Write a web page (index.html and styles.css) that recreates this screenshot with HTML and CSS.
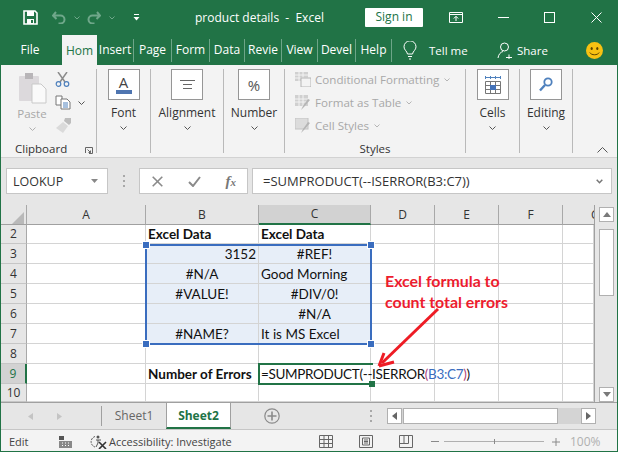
FILE: index.html
```html
<!DOCTYPE html>
<html lang="en">
<head>
  <meta charset="UTF-8">
  <title>product details - Excel</title>
  <link rel="stylesheet" href="styles.css">
</head>
<body>
  <div class="window">
    <div class="titlebar">
      <svg class="qat-save" width="15" height="15" viewBox="0 0 15 15"><path d="M1 1h11l2 2v11H1z" fill="none" stroke="#fff" stroke-width="1.6"/><rect x="4" y="1" width="7" height="5" fill="#fff"/><rect x="4" y="9" width="7" height="5" fill="#fff"/><rect x="8" y="10" width="2" height="3" fill="#217346"/></svg>
      <svg class="qat-undo" width="14" height="13" viewBox="0 0 14 13"><path d="M4 1 1 4.500 4.500 8M1.500 4.500h7a4 4 0 0 1 0 8h-2" fill="none" stroke="#6fa78a" stroke-width="2"/></svg>
      <svg class="qat-chev" width="6" height="4" viewBox="0 0 6 4"><path d="M.5.500 3 3 5.500.5" fill="none" stroke="#6fa78a"/></svg>
      <svg class="qat-redo" width="14" height="13" viewBox="0 0 14 13"><path d="M10 1l3 3.500L9.500 8M12.500 4.500h-7a4 4 0 0 0 0 8h2" fill="none" stroke="#6fa78a" stroke-width="2"/></svg>
      <svg class="qat-chev" width="6" height="4" viewBox="0 0 6 4"><path d="M.5.500 3 3 5.500.5" fill="none" stroke="#6fa78a"/></svg>
      <svg class="qat-more" width="7" height="7" viewBox="0 0 7 7"><path d="M1 .5h5" stroke="#fff"/><path d="M.5 3h6L3.500 6.500z" fill="#fff"/></svg>
      <span class="doc-title">product details&nbsp; - &nbsp;Excel</span>
      <span class="signin">Sign in</span>
      <svg class="win-display" width="14" height="11" viewBox="0 0 14 11"><path d="M.5.500h13v10H.5zM.5 2.500h13M7 9V4.500M4.800 6.500 7 4.300l2.200 2.200" fill="none" stroke="#fff"/></svg>
      <svg class="win-min" width="11" height="1" viewBox="0 0 11 1"><path d="M0 .5h11" stroke="#fff"/></svg>
      <svg class="win-max" width="11" height="11" viewBox="0 0 11 11"><rect x=".5" y=".5" width="10" height="10" fill="none" stroke="#fff"/></svg>
      <svg class="win-close" width="11" height="11" viewBox="0 0 11 11"><path d="M.5.500l10 10M10.500.5l-10 10" stroke="#fff"/></svg>
    </div>

    <div class="tabs">
      <span class="tab tab-file">File</span>
      <span class="tab tab-active">Hom</span>
      <span class="tab w37">Insert</span>
      <span class="tab w38">Page</span>
      <span class="tab w38">Form</span>
      <span class="tab w35">Data</span>
      <span class="tab w37">Revie</span>
      <span class="tab w36">View</span>
      <span class="tab w38">Devel</span>
      <span class="tab w36">Help</span>
      <svg class="bulb" width="14" height="19" viewBox="0 0 14 19"><path d="M4.500 13C4 10 1 9 1 5.800a6 6 0 0 1 12 0C13 9 10 10 9.500 13zM5 15.500h4M6 18h2" fill="none" stroke="#fff"/></svg>
      <span class="tellme">Tell me</span>
      <svg class="share-icon" width="16" height="17" viewBox="0 0 16 17"><circle cx="7.500" cy="5" r="4" fill="none" stroke="#fff"/><path d="M1 16c.5-3.500 2.500-6 5-6.500M9 15.500h6M12 12.500v6" fill="none" stroke="#fff"/></svg>
      <span class="share">Share</span>
      <svg class="smiley" width="17" height="17" viewBox="0 0 17 17"><circle cx="8.500" cy="8.500" r="8.500" fill="#f7c112"/><ellipse cx="5.700" cy="6.500" rx="1.100" ry="1.600" fill="#5a4300"/><ellipse cx="11.300" cy="6.500" rx="1.100" ry="1.600" fill="#5a4300"/><path d="M3.800 10.500c1.500 3 7.900 3 9.400 0" fill="none" stroke="#5a4300"/></svg>
    </div>

    <div class="ribbon">
      <div class="group g-clip">
        <div class="clip-body">
          <div class="paste">
            <svg width="29" height="31" viewBox="0 0 29 31"><rect x="1" y="3" width="20" height="25" rx="1" fill="#dcd9dc"/><rect x="7" y="0" width="8" height="6" fill="#b8b5b8"/><path d="M14 11h9l5 5v14H14z" fill="#fafafa" stroke="#c9c9c9"/></svg>
            <span class="muted">Paste</span>
            <svg class="chev" width="7" height="4" viewBox="0 0 7 4"><path d="M.5.500 3.500 3.500 6.500.5" fill="none" stroke="#b0b0b0"/></svg>
          </div>
          <div class="clip-tools">
            <svg width="15" height="15" viewBox="0 0 15 15"><path d="M3 0l7 10M12 0 5 10" stroke="#8c8c8c" stroke-width="1.500"/><circle cx="3.500" cy="12" r="2.300" fill="none" stroke="#4f81bd" stroke-width="1.200"/><circle cx="11.500" cy="12" r="2.300" fill="none" stroke="#4f81bd" stroke-width="1.200"/></svg>
            <div class="copy-row">
              <svg width="16" height="15" viewBox="0 0 16 15"><path d="M1 1h6v9H1z" fill="#fff" stroke="#777"/><path d="M6 4h6l3 3v7H6z" fill="#fff" stroke="#777"/><path d="M8 8h5M8 10h5M8 12h5" stroke="#4f81bd"/></svg>
              <svg width="7" height="4" viewBox="0 0 7 4"><path d="M.5.500 3.500 3.500 6.500.5" fill="none" stroke="#555"/></svg>
            </div>
            <svg width="17" height="16" viewBox="0 0 17 16"><path d="M10 0h6v5l-2 2-5-4z" fill="#bdbdbd"/><path d="M8 4l5 4-5 7-7-5z" fill="#dadada"/></svg>
          </div>
        </div>
        <div class="group-label clip-label">Clipboard
          <svg class="launcher" width="8" height="7" viewBox="0 0 8 7"><path d="M.5 6V.5H7.500V6.500H4M2.500 2.500l3 3M5.500 3.500v2H3.500" fill="none" stroke="#666"/></svg>
        </div>
      </div>

      <div class="group g-font">
        <div class="box box-font">
          <span class="box-letter">A</span>
          <i class="font-bar"></i>
        </div>
        <span class="label">Font</span>
        <svg class="chev" width="7" height="4" viewBox="0 0 7 4"><path d="M.5.500 3.500 3.500 6.500.5" fill="none" stroke="#555"/></svg>
      </div>

      <div class="group g-align">
        <div class="box">
          <svg width="15" height="9" viewBox="0 0 15 9"><path d="M0 .5h15M3 4.500h9M3 8.500h9" stroke="#666"/></svg>
        </div>
        <span class="label">Alignment</span>
        <svg class="chev" width="7" height="4" viewBox="0 0 7 4"><path d="M.5.500 3.500 3.500 6.500.5" fill="none" stroke="#555"/></svg>
      </div>

      <div class="group g-number">
        <div class="box"><span class="percent">%</span></div>
        <span class="label">Number</span>
        <svg class="chev" width="7" height="4" viewBox="0 0 7 4"><path d="M.5.500 3.500 3.500 6.500.5" fill="none" stroke="#555"/></svg>
      </div>

      <div class="group g-styles">
        <div class="style-rows">
          <div class="style-row">
            <svg width="16" height="15" viewBox="0 0 16 15"><path d="M0 0h13v9H0z" fill="#d0d0d0"/><path d="M4 0v9M8 0v9M0 3h13M0 6h13" stroke="#f3f3f3"/><rect x="6" y="6" width="10" height="9" fill="#f3f3f3" stroke="#b5b5b5"/></svg>
            <span>Conditional Formatting</span>
            <svg width="6" height="4" viewBox="0 0 6 4"><path d="M.5.500 3 3 5.500.5" fill="none" stroke="#b5b5b5"/></svg>
          </div>
          <div class="style-row">
            <svg width="16" height="16" viewBox="0 0 16 16"><path d="M0 0h13v11H0z" fill="#d0d0d0"/><path d="M4 0v11M8 0v11M0 4h13M0 7h13" stroke="#f3f3f3"/><path d="M15 5 9 12l-3 3 2-4 5-7z" fill="#b5b5b5"/></svg>
            <span>Format as Table</span>
            <svg width="6" height="4" viewBox="0 0 6 4"><path d="M.5.500 3 3 5.500.5" fill="none" stroke="#b5b5b5"/></svg>
          </div>
          <div class="style-row">
            <svg width="16" height="16" viewBox="0 0 16 16"><rect width="13" height="11" fill="#dcdcdc" stroke="#c4c4c4"/><path d="M15 5 9 12l-3 3 2-4 5-7z" fill="#b5b5b5"/></svg>
            <span>Cell Styles</span>
            <svg width="6" height="4" viewBox="0 0 6 4"><path d="M.5.500 3 3 5.500.5" fill="none" stroke="#b5b5b5"/></svg>
          </div>
        </div>
        <div class="group-label">Styles</div>
      </div>

      <div class="group g-cells">
        <div class="box">
          <svg width="16" height="18" viewBox="0 0 16 18"><path d="M.5 1.500h15M.5 0v3M5.500 0v3M10.500 0v3M15.500 0v3" stroke="#4f81bd" fill="none"/><path d="M.5 5.500h15v12H.5zM5.500 5.500v12M10.500 5.500v12M.5 9.500h15M.5 13.500h15" stroke="#777" fill="none"/><rect x="5" y="9" width="6" height="5" fill="#4472b8"/></svg>
        </div>
        <span class="label">Cells</span>
        <svg class="chev" width="7" height="4" viewBox="0 0 7 4"><path d="M.5.500 3.500 3.500 6.500.5" fill="none" stroke="#555"/></svg>
      </div>

      <div class="group g-editing">
        <div class="box">
          <svg width="14" height="15" viewBox="0 0 14 15"><circle cx="9" cy="5" r="3.700" fill="none" stroke="#4f81bd" stroke-width="1.800"/><path d="M6 8l-5 5.500" stroke="#4f81bd" stroke-width="2.400"/></svg>
        </div>
        <span class="label">Editing</span>
        <svg class="chev" width="7" height="4" viewBox="0 0 7 4"><path d="M.5.500 3.500 3.500 6.500.5" fill="none" stroke="#555"/></svg>
      </div>

      <div class="ribbon-end">
        <svg width="11" height="6" viewBox="0 0 11 6"><path d="M.5 5.500 5.500.5l5 5" fill="none" stroke="#555"/></svg>
      </div>
    </div>

    <div class="formula-bar">
      <div class="name-box">LOOKUP
        <svg width="7" height="4" viewBox="0 0 7 4"><path d="M0 0h7L3.500 4z" fill="#888"/></svg>
      </div>
      <div class="grip"><i></i><i></i><i></i></div>
      <div class="fx-box">
        <svg width="11" height="11" viewBox="0 0 11 11"><path d="M.7.700l9.600 9.600M10.300.7.700 10.300" stroke="#8a8a8a" stroke-width="1.600"/></svg>
        <svg width="13" height="11" viewBox="0 0 13 11"><path d="M1 6l4 4 7-9" fill="none" stroke="#8a8a8a" stroke-width="2"/></svg>
        <span class="fx">f<small>x</small></span>
      </div>
      <div class="formula-input">=SUMPRODUCT(--ISERROR(B3:C7))
        <svg width="7" height="5" viewBox="0 0 7 5"><path d="M.7.700 3.500 3.700 6.300.7" fill="none" stroke="#777" stroke-width="1.500"/></svg>
      </div>
    </div>

    <div class="sheet-area">
      <div class="grid-wrap">
        <table class="grid">
          <colgroup>
            <col class="c-head"><col class="c-a"><col class="c-b"><col class="c-c"><col class="c-n"><col class="c-n"><col class="c-n"><col class="c-g">
          </colgroup>
          <tr class="col-heads">
            <th class="corner"><svg width="12" height="12" viewBox="0 0 12 12"><path d="M12 0v12H0z" fill="#b9b9b9"/></svg></th>
            <th>A</th><th>B</th><th class="head-on">C</th><th>D</th><th>E</th><th>F</th><th class="head-g">G</th>
          </tr>
          <tr class="r19"><th>2</th><td></td><td class="bold">Excel Data</td><td class="bold">Excel Data</td><td></td><td></td><td></td><td></td></tr>
          <tr><th>3</th><td></td><td class="sel right">3152</td><td class="sel center">#REF!</td><td></td><td></td><td></td><td></td></tr>
          <tr><th>4</th><td></td><td class="sel center">#N/A</td><td class="sel">Good Morning</td><td></td><td></td><td></td><td></td></tr>
          <tr><th>5</th><td></td><td class="sel center">#VALUE!</td><td class="sel center">#DIV/0!</td><td></td><td></td><td></td><td></td></tr>
          <tr><th>6</th><td></td><td class="sel"></td><td class="sel center">#N/A</td><td></td><td></td><td></td><td></td></tr>
          <tr><th>7</th><td></td><td class="sel center">#NAME?</td><td class="sel">It is MS Excel</td><td></td><td></td><td></td><td></td></tr>
          <tr><th>8</th><td></td><td></td><td></td><td></td><td></td><td></td><td></td></tr>
          <tr><th class="head-row-on">9</th><td></td><td class="bold nowrap">Number of Errors</td><td class="nowrap spill">=SUMPRODUCT(--ISERROR<span class="paren">(</span><span class="ref">B3:C7</span><span class="paren">)</span>)</td><td></td><td></td><td></td><td></td></tr>
          <tr class="r18"><th>10</th><td></td><td></td><td></td><td></td><td></td><td></td><td></td></tr>
        </table>

        <div class="range-sel">
          <i class="handle h-tl"></i><i class="handle h-tr"></i><i class="handle h-bl"></i><i class="handle h-br"></i>
        </div>
        <div class="active-cell"><i class="active-handle"></i></div>
        <div class="note">Excel formula to<br>count total errors</div>
        <svg class="arrow" width="66" height="62" viewBox="0 0 66 62"><path d="M62 2 6 56" stroke="#ee1c25" stroke-width="3"/><path d="M3 59 8 46M3 59l15-4" stroke="#ee1c25" stroke-width="3" fill="none"/></svg>
      </div>
      <div class="vscroll">
        <span class="vbtn"><svg width="8" height="5" viewBox="0 0 8 5"><path d="M4 0l4 5H0z" fill="#7a7a7a"/></svg></span>
        <span class="vthumb"></span>
        <span class="vbtn vbtn-down"><svg width="8" height="5" viewBox="0 0 8 5"><path d="M4 5 8 0H0z" fill="#7a7a7a"/></svg></span>
      </div>
    </div>

    <div class="sheet-tabs">
      <svg class="nav-l" width="5" height="7" viewBox="0 0 5 7"><path d="M5 0v7L0 3.500z" fill="#c4c4c4"/></svg>
      <svg class="nav-r" width="5" height="7" viewBox="0 0 5 7"><path d="M0 0v7l5-3.500z" fill="#c4c4c4"/></svg>
      <span class="tab-sep"></span>
      <span class="sheet">Sheet1</span>
      <span class="sheet sheet-active">Sheet2</span>
      <svg class="add-sheet" width="16" height="16" viewBox="0 0 16 16"><circle cx="8" cy="8" r="7.200" fill="none" stroke="#8a8a8a" stroke-width="1.200"/><path d="M8 3.500v9M3.500 8h9" stroke="#8a8a8a" stroke-width="1.600"/></svg>
      <div class="tab-grip"><i></i><i></i><i></i></div>
      <div class="hscroll">
        <span class="hbtn"><svg width="5" height="8" viewBox="0 0 5 8"><path d="M5 0v8L0 4z" fill="#666"/></svg></span>
        <span class="hthumb"></span>
        <span class="hbtn hbtn-right"><svg width="5" height="8" viewBox="0 0 5 8"><path d="M0 0v8l5-4z" fill="#666"/></svg></span>
      </div>
    </div>

    <div class="statusbar">
      <span class="st-edit">Edit</span>
      <svg class="st-macro" width="13" height="12" viewBox="0 0 13 12"><rect x="0" y="0" width="5" height="4" fill="#555"/><path d="M0 5h13v7H0z" fill="#888"/><path d="M3 7h1M6 7h1M9 7h1M3 9.500h1M6 9.500h1M9 9.500h1" stroke="#fff"/></svg>
      <svg class="st-acc" width="17" height="14" viewBox="0 0 17 14"><path d="M5 1.500a5.500 5.500 0 0 0 0 10.500" fill="none" stroke="#555" stroke-dasharray="2 1"/><circle cx="8" cy="2" r="1.500" fill="#555"/><path d="M6 5h5M8 5v3M8 8l-2 4" stroke="#555" fill="none"/><path d="M9 7l7 7M16 7l-7 7" stroke="#333" stroke-width="1.600"/></svg>
      <span class="st-acc-text">Accessibility: Investigate</span>
      <svg class="st-view1" width="14" height="13" viewBox="0 0 14 13"><path d="M.5.500h13v12H.5zM.5 4.500h13M.5 8.500h13M5 .5v12M9.500.5v12" fill="none" stroke="#666"/></svg>
      <svg class="st-view2" width="14" height="13" viewBox="0 0 14 13"><path d="M.5.500h13v12H.5z" fill="none" stroke="#666"/><path d="M3.500 3h7v7h-7zM5 5h4M5 6.500h4M5 8h4" fill="none" stroke="#666"/></svg>
      <svg class="st-view3" width="14" height="13" viewBox="0 0 14 13"><path d="M.5.500h13v12H.5zM.5 8.500h9V.5M5 .5v8" fill="none" stroke="#666"/></svg>
      <svg class="st-minus" width="8" height="1" viewBox="0 0 8 1"><path d="M0 .5h8" stroke="#8a8a8a"/></svg>
      <div class="st-slider"><i></i></div>
      <svg class="st-plus" width="8" height="8" viewBox="0 0 8 8"><path d="M0 4h8M4 0v8" stroke="#8a8a8a"/></svg>
      <span class="st-zoom">100%</span>
    </div>
  </div>
</body>
</html>
```

FILE: styles.css
```css
* {
  box-sizing: border-box;
}
body {
  margin: 0;
  font-family: "Open Sans", Arial, sans-serif;
  color: #333;
}
.window {
  width: 618px;
  height: 452px;
  border: 1px solid #217346;
  border-top: 0;
  background: #e6e6e6;
  overflow: hidden;
}
svg {
  display: block;
  flex: none;
}

/* title bar */
.titlebar {
  height: 35px;
  margin-left: -1px;
  margin-right: -1px;
  background: #217346;
  display: flex;
  align-items: center;
  color: #fff;
}
.qat-save { margin-left: 23px; }
.qat-undo { margin-left: 14px; }
.qat-chev { margin-left: 8px; }
.qat-redo { margin-left: 7px; }
.qat-more { margin-left: 18px; }
.doc-title {
  margin-left: 55px;
  width: 123px;
  font-size: 12px;
  white-space: nowrap;
}
.signin {
  margin-left: 47px;
  width: 58px;
  height: 19px;
  background: #fff;
  color: #217346;
  font-size: 12px;
  line-height: 18px;
  text-align: center;
  border-radius: 1px;
}
.win-display { margin-left: 26px; }
.win-min { margin-left: 35px; }
.win-max { margin-left: 35px; }
.win-close { margin-left: 36px; }

/* ribbon tabs */
.tabs {
  height: 30px;
  margin-left: -1px;
  margin-right: -1px;
  background: #217346;
  display: flex;
  align-items: center;
  color: #fff;
  font-size: 12px;
}
.tab {
  height: 23px;
  line-height: 22px;
  text-align: center;
  border-right: 1px solid #6da588;
  white-space: nowrap;
  overflow: hidden;
}
.tab-file {
  width: 62px;
  border-right: 0;
  padding-right: 2px;
}
.tab-active {
  width: 35px;
  height: 30px;
  line-height: 32px;
  background: #f3f3f3;
  color: #217346;
  border-right: 0;
}
.w35 { width: 35px; }
.w36 { width: 36px; }
.w37 { width: 37px; }
.w38 { width: 38px; }
.bulb { margin-left: 11px; }
.tellme {
  margin-left: 12px;
  width: 40px;
  white-space: nowrap;
  font-size: 11.5px;
}
.share-icon { margin-left: 28px; }
.share {
  margin-left: 4px;
  width: 32px;
  font-size: 11.5px;
}
.smiley { margin-left: 37px; }

/* ribbon */
.ribbon {
  height: 93px;
  background: #f3f3f3;
  border-bottom: 1px solid #d2d2d2;
  padding-top: 4px;
  display: flex;
  align-items: flex-start;
  font-size: 12px;
}
.group {
  height: 84px;
  border-right: 1px solid #b9b9b9;
  display: flex;
  flex-direction: column;
  align-items: center;
  position: relative;
}
.g-clip { width: 96px; }
.g-font { width: 54px; }
.g-align { width: 73px; }
.g-number { width: 61px; }
.g-styles { width: 181px; align-items: stretch; }
.g-cells { width: 54px; }
.g-editing { width: 53px; }
.box {
  width: 32px;
  height: 31px;
  margin-bottom: 4px;
  border: 1px solid #969696;
  background: #fff;
  display: flex;
  align-items: center;
  justify-content: center;
}
.box-font {
  flex-direction: column;
  justify-content: flex-start;
}
.box-letter {
  height: 16px;
  margin-top: 3px;
  font-size: 15px;
  line-height: 18px;
  color: #444;
}
.font-bar {
  width: 16px;
  height: 4px;
  margin-top: 1px;
  background: #4f75b0;
}
.percent {
  font-size: 15px;
  color: #555;
}
.label {
  height: 17px;
  line-height: 17px;
  color: #333;
  white-space: nowrap;
}
.chev {
  margin-top: 5px;
}
.group-label {
  position: absolute;
  left: 0;
  right: 0;
  bottom: -5px;
  height: 18px;
  line-height: 18px;
  font-size: 11.5px;
  text-align: center;
  color: #333;
}
.clip-label {
  text-align: left;
  padding-left: 14px;
}
.launcher {
  position: absolute;
  left: 84px;
  top: 7px;
}
.clip-body {
  width: 100%;
  display: flex;
  padding: 4px 0 0 16px;
}
.paste {
  width: 30px;
  display: flex;
  flex-direction: column;
  align-items: center;
}
.muted {
  margin-top: 1px;
  color: #a8a8a8;
  line-height: 17px;
  font-size: 11.5px;
}
.paste .chev { margin-top: 5px; }
.clip-tools {
  margin-left: 8px;
  margin-top: -1px;
  display: flex;
  flex-direction: column;
  gap: 8px;
}
.copy-row {
  display: flex;
  align-items: center;
  gap: 7px;
}
.style-rows {
  margin-top: -1px;
  padding: 0 0 0 10px;
  display: flex;
  flex-direction: column;
  font-size: 11.6px;
}
.style-row {
  height: 23px;
  display: flex;
  align-items: center;
  color: #a8a8a8;
  white-space: nowrap;
}
.style-row span {
  margin: 0 5px 0 4px;
}
.ribbon-end {
  flex: 1;
  height: 84px;
  display: flex;
  justify-content: flex-end;
  align-items: flex-end;
  padding: 0 9px 0 0;
}

/* formula bar */
.formula-bar {
  height: 47px;
  padding: 10px 5px 0 5px;
  display: flex;
  align-items: flex-start;
  font-size: 12.5px;
}
.name-box, .fx-box, .formula-input {
  height: 26px;
  background: #fff;
  border: 1px solid #c6c6c6;
  display: flex;
  align-items: center;
}
.name-box {
  width: 102px;
  padding: 0 9px 0 6px;
  justify-content: space-between;
}
.grip {
  width: 31px;
  display: flex;
  flex-direction: column;
  align-items: center;
  gap: 3px;
  padding-top: 7px;
}
.grip i, .tab-grip i {
  display: block;
  width: 2px;
  height: 2px;
  background: #a8a8a8;
}
.fx-box {
  width: 109px;
  padding: 0 11px 0 12px;
  justify-content: space-between;
}
.fx {
  font-family: "Liberation Serif", serif;
  font-style: italic;
  font-weight: 700;
  font-size: 15px;
  color: #777;
}
.fx small {
  font-size: 11px;
}
.formula-input {
  width: 360px;
  margin-left: 4px;
  padding: 0 4px 0 10px;
  justify-content: space-between;
  font-size: 13px;
}
.formula-input svg {
  margin-right: 4px;
}

/* sheet */
.sheet-area {
  height: 197px;
  display: flex;
}
.grid-wrap {
  width: 594px;
  height: 197px;
  position: relative;
  overflow: hidden;
  background: #fff;
  border-right: 1px solid #a0a0a0;
}
.grid {
  table-layout: fixed;
  border-collapse: separate;
  border-spacing: 0;
  width: 593px;
  font-family: Lato, Arial, sans-serif;
  font-size: 13.5px;
  color: #111;
}
.c-head { width: 26px; }
.c-a { width: 119px; }
.c-b { width: 113px; }
.c-c { width: 112px; }
.c-n { width: 64px; }
.c-g { width: 31px; }
.grid tr {
  height: 20px;
}
.grid tr.col-heads {
  height: 20px;
}
.grid tr.r19 { height: 19px; }
.grid tr.r18 { height: 18px; }
.grid td {
  padding: 0 2px;
  border-right: 1px solid #d4d4d4;
  border-bottom: 1px solid #d4d4d4;
  overflow: hidden;
  white-space: nowrap;
  line-height: 16px;
}
.grid th {
  padding: 0;
  font-family: "Open Sans", Arial, sans-serif;
  font-weight: 400;
  font-size: 12px;
  line-height: 16px;
  color: #333;
  text-align: center;
  background: #e6e6e6;
  border-right: 1px solid #a8a8a8;
  border-bottom: 1px solid #c6c6c6;
}
.col-heads th {
  border-bottom: 1px solid #a0a0a0;
  overflow: hidden;
}
.col-heads .corner {
  padding: 6px 3px 0 11px;
}
.col-heads .head-on {
  background: #d2d2d2;
  border-bottom: 2px solid #217346;
}
.col-heads .head-g {
  text-align: left;
  padding-left: 28px;
  border-right: 0;
}
.grid .head-row-on {
  background: #d2d2d2;
  color: #217346;
  border-right: 2px solid #217346;
}
.bold { font-weight: 700; }
.sel { background: #e7eef8; }
.right { text-align: right; }
.center { text-align: center; }
.nowrap { white-space: nowrap; }
.grid td.spill {
  overflow: visible;
  position: relative;
  letter-spacing: -0.33px;
}
.ref { color: #3a6dbf; }
.paren { color: #b0457a; }
.range-sel {
  position: absolute;
  left: 144px;
  top: 39px;
  width: 227px;
  height: 101px;
  border: 2px solid #3a6dbf;
}
.handle {
  position: absolute;
  width: 6px;
  height: 6px;
  background: #3a6dbf;
  border: 1px solid #fff;
  box-sizing: content-box;
}
.h-tl { left: -5px; top: -5px; }
.h-tr { right: -5px; top: -5px; }
.h-bl { left: -5px; bottom: -5px; }
.h-br { right: -5px; bottom: -5px; }
.active-cell {
  position: absolute;
  left: 257px;
  top: 158px;
  width: 115px;
  height: 22px;
  border: 2px solid #217346;
  border-right: 0;
}
.active-handle {
  position: absolute;
  right: -2px;
  bottom: -4px;
  width: 6px;
  height: 6px;
  background: #217346;
}
.note {
  position: absolute;
  left: 384px;
  top: 65px;
  font-family: Lato, Arial, sans-serif;
  font-weight: 700;
  font-size: 15.9px;
  line-height: 21px;
  color: #ed1c2e;
  white-space: nowrap;
}
.arrow {
  position: absolute;
  left: 375px;
  top: 102px;
}
.vscroll {
  flex: 1;
  position: relative;
  padding: 2px 3px 0 4px;
  display: flex;
  flex-direction: column;
}
.vbtn {
  height: 15px;
  background: #fff;
  border: 1px solid #b0b0b0;
  display: flex;
  align-items: center;
  justify-content: center;
}
.vthumb {
  margin-top: 7px;
  height: 67px;
  background: #fff;
  border: 1px solid #b0b0b0;
}
.vbtn-down {
  margin-top: auto;
}

/* sheet tabs */
.sheet-tabs {
  height: 28px;
  border-bottom: 1px solid #c6c6c6;
  border-top: 1px solid #a0a0a0;
  display: flex;
  align-items: center;
  font-size: 12px;
}
.nav-l { margin-left: 27px; }
.nav-r { margin-left: 24px; }
.tab-sep {
  margin-left: 39px;
  width: 1px;
  height: 20px;
  background: #a0a0a0;
}
.sheet {
  width: 64px;
  height: 26px;
  line-height: 26px;
  text-align: center;
  color: #666;
}
.sheet-active {
  width: 65px;
  background: #fff;
  color: #217346;
  font-weight: 700;
  border-left: 1px solid #a0a0a0;
  border-right: 1px solid #a0a0a0;
  border-bottom: 2px solid #217346;
  margin-top: -1px;
}
.add-sheet { margin-left: 33px; }
.tab-grip {
  margin-left: 90px;
  display: flex;
  flex-direction: column;
  gap: 3px;
}
.hscroll {
  margin-left: 15px;
  width: 209px;
  height: 16px;
  background: #d4d4d4;
  display: flex;
}
.hbtn {
  width: 15px;
  background: #fff;
  border: 1px solid #b0b0b0;
  display: flex;
  align-items: center;
  justify-content: center;
}
.hthumb {
  margin-left: 1px;
  width: 155px;
  background: #fff;
  border: 1px solid #b0b0b0;
}
.hbtn-right {
  margin-left: auto;
}

/* status bar */
.statusbar {
  height: 23px;
  background: #f3f3f3;
  display: flex;
  align-items: center;
  font-size: 11px;
  color: #444;
}
.st-edit { margin-left: 8px; width: 20px; }
.st-macro { margin-left: 30px; }
.st-acc { margin-left: 18px; }
.st-acc-text { margin-left: 2px; width: 125px; white-space: nowrap; }
.st-view1 { margin-left: 85px; }
.st-view2 { margin-left: 26px; }
.st-view3 { margin-left: 26px; }
.st-minus { margin-left: 18px; }
.st-slider {
  margin-left: 5px;
  width: 100px;
  height: 1px;
  background: #b0b0b0;
  position: relative;
}
.st-slider i {
  position: absolute;
  left: 50px;
  top: -2px;
  width: 1px;
  height: 5px;
  background: #8a8a8a;
}
.st-plus { margin-left: 8px; }
.st-zoom { margin-left: 10px; color: #b0b0b0; font-size: 12px; }
```
